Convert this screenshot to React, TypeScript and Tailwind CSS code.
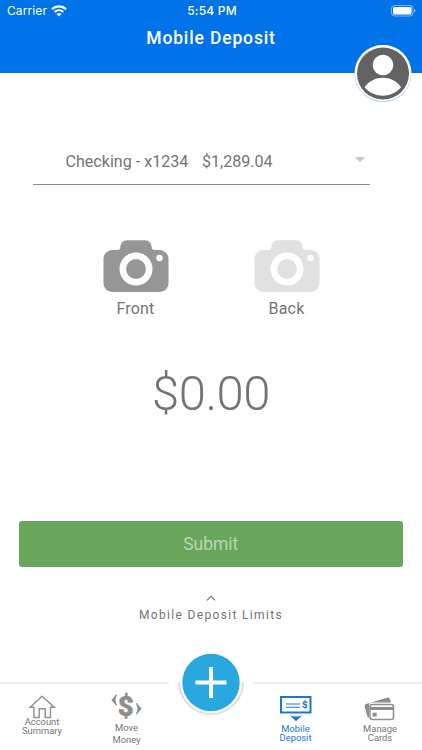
import { ReactNode } from 'react';

interface CaptureProps {
  label: string;
  color: string;
}

interface NavItemProps {
  label: string;
  icon: ReactNode;
  className: string;
}

const WifiIcon = () => (
  <svg width="16" height="12" viewBox="0 0 16 12" fill="none" stroke="#fff" strokeWidth="2.1">
    <path d="M1 4.3C5 .4 11 .4 15 4.3" />
    <path d="M3.6 7C6.2 4.6 9.800 4.6 12.400 7" />
    <path d="M8 11.600 5.500 9C6.900 7.700 9.100 7.700 10.500 9Z" fill="#fff" stroke="none" />
  </svg>
);

const BatteryIcon = () => (
  <svg width="26" height="12" viewBox="0 0 26 12" fill="none">
    <rect x=".5" y=".5" width="21.500" height="10.500" rx="3" stroke="#fff" strokeOpacity=".5" />
    <rect x="2" y="2" width="18.500" height="7.500" rx="1.600" fill="#fff" />
    <path d="M23.300 4v3.600c1.600-.6 1.600-3 0-3.600Z" fill="#fff" fillOpacity=".6" />
  </svg>
);

const Avatar = () => (
  <svg className="absolute left-[354px] top-[44px]" width="58" height="59" viewBox="0 0 58 59">
    <circle cx="29" cy="29.500" r="28.600" fill="#c3d6f0" />
    <circle cx="29" cy="29" r="28" fill="#fff" />
    <circle cx="29" cy="29.500" r="26" fill="#626262" />
    <circle cx="29" cy="21" r="10.300" fill="#fff" />
    <path d="M10.600 43.200C19 30.500 39 30.500 47 43.200C37.500 54.500 20 54.500 10.600 43.200Z" fill="#fff" />
  </svg>
);

const Capture = ({ label, color }: CaptureProps) => (
  <button className="flex w-[66px] flex-col items-center">
    <svg width="66" height="52" viewBox="0 0 66 52">
      <path
        d="M10 10H14C16 10 17.300 9.200 17.300 7.500C17.300 3.500 20 .3 24 .3H42C46 .3 48.700 3.500 48.700 7.500C48.700 9.200 50 10 52 10H56C61.500 10 65.500 14 65.500 19V43C65.500 48 61.500 52 56 52H10C4.500 52 .5 48 .5 43V19C.5 14 4.500 10 10 10Z"
        fill={color}
      />
      <circle cx="33" cy="29" r="16.500" fill="#fff" />
      <circle cx="33" cy="29" r="9.900" fill={color} />
      <circle cx="56.500" cy="18" r="3.200" fill="#fff" />
    </svg>
    <span className="mt-[5px] text-[16px] leading-[24px] tracking-[0.2px]">{label}</span>
  </button>
);

const HouseIcon = () => (
  <svg width="28" height="24" viewBox="0 0 28 24" fill="none" stroke="#949494" strokeWidth="1.500">
    <path d="M14 1.200 2.200 12.200H5.900V22.400H11.200V13.700H17.200V22.400H22.500V12.200H26.200Z" />
  </svg>
);

const MoneyIcon = () => (
  <svg width="32" height="32" viewBox="0 0 32 32" fill="#8e8e8e">
    <path d="M5.500 4.500.8 10.300 5.500 15.500 4 10.200Z" stroke="#8e8e8e" strokeWidth=".8" />
    <path d="M25.500 13.200 30.200 18.700 25.500 24.300 27 18.700Z" stroke="#8e8e8e" strokeWidth=".8" />
    <text
      x="14.800"
      y="25.700"
      textAnchor="middle"
      fontFamily="Roboto, sans-serif"
      fontSize="27.500"
      fontWeight="900"
      stroke="#8e8e8e"
      strokeWidth=".4"
    >
      $
    </text>
  </svg>
);

const CheckIcon = () => (
  <svg width="32" height="26" viewBox="0 0 32 26" fill="#1876d8">
    <rect x="1" y="1" width="29.500" height="15.500" fill="none" stroke="#1876d8" strokeWidth="2" />
    <path d="M6 7.500H20V8.600H6ZM6 10.700H20V11.800H6Z" />
    <path d="M10 19.300C14 21 18 21 22 19.300L16 25.200Z" />
    <text
      x="24.700"
      y="12.300"
      textAnchor="middle"
      fontFamily="Roboto, sans-serif"
      fontSize="9.500"
      fontWeight="900"
    >
      $
    </text>
  </svg>
);

const CardsIcon = () => (
  <svg width="32" height="24" viewBox="0 0 32 24">
    <path
      d="M2 7 23 .7C24.500.3 25.500.8 26 2.200L27 5.500H8C6 5.500 5 6.500 5 8.500V20.500C4 20.500 3.500 20 3.200 19L.8 10C.4 8.400.8 7.400 2 7Z"
      fill="#8e8e8e"
    />
    <rect x="6" y="7.400" width="23.500" height="15" rx="2.500" fill="#fff" stroke="#8e8e8e" strokeWidth="1.500" />
    <path d="M5.500 10H30V13H5.500Z" fill="#8e8e8e" />
    <rect x="8.500" y="15.700" width="4.200" height="3.800" fill="#8e8e8e" />
  </svg>
);

const NavItem = ({ label, icon, className }: NavItemProps) => (
  <a className={`flex w-[84px] flex-col items-center text-[9.400px] ${className}`}>
    {icon}
    <span className="whitespace-pre-line text-center">{label}</span>
  </a>
);

const App = () => {
  return (
    <div className="relative flex h-[750px] w-[422px] flex-col overflow-hidden bg-white font-['Roboto',sans-serif] text-[#747474]">
      <header className="h-[73px] flex-shrink-0 bg-[#0073e8] text-white">
        <div className="grid h-[21px] grid-cols-3 items-center pl-[7px] pr-[5px] font-['Inter',sans-serif] text-[12px] leading-[15px]">
          <div className="flex items-center gap-[4px] tracking-[0.1px]">
            Carrier
            <WifiIcon />
          </div>
          <span className="text-center text-[12px] font-medium tracking-[0.2px]">5:54 PM</span>
          <div className="flex justify-end">
            <BatteryIcon />
          </div>
        </div>
        <h1 className="mt-[5px] text-center text-[17.500px] font-medium leading-[25px] tracking-[0.850px]">
          Mobile Deposit
        </h1>
      </header>
      <Avatar />

      <main className="flex h-[609px] flex-shrink-0 flex-col">
        <div className="ml-[33px] mt-[76px] flex h-[36px] w-[337px] items-start border-b border-[#8c8c8c] pl-[32.500px] pr-[5px]">
          <div className="flex flex-1 gap-[13.500px] pt-px text-[16.100px] leading-[24px]">
            <span>Checking - x1234</span>
            <span>$1,289.04</span>
          </div>
          <svg className="mt-[8px]" width="10" height="6" viewBox="0 0 10 6">
            <path d="M0 0H10L5 5.500Z" fill="#c9c9c9" />
          </svg>
        </div>

        <div className="mt-[55px] flex gap-[85px] pl-[102.500px]">
          <Capture label="Front" color="#969696" />
          <Capture label="Back" color="#e1e1e1" />
        </div>

        <div className="mt-[43px] text-center text-[49px] font-light leading-[60px] tracking-[-0.5px]">$0.00</div>

        <button className="mr-[19px] ml-[18.500px] mt-[97px] h-[46px] flex-shrink-0 rounded-[3px] bg-[#6aa55c] pt-px text-[17.500px] text-[#b9d7b2]">
          Submit
        </button>

        <div className="mt-[28px] flex flex-col items-center">
          <svg width="10" height="6" viewBox="0 0 10 6" fill="none" stroke="#6a6a6a" strokeWidth="1.100">
            <path d="M1 5.300 5 1.200 9 5.300" />
          </svg>
          <span className="mt-[5px] text-[12px] leading-[18px] tracking-[1.330px]">Mobile Deposit Limits</span>
        </div>
      </main>

      <nav className="relative flex h-[68px] flex-shrink-0 justify-between">
        <div className="absolute left-0 top-0 h-[2px] w-[169px] bg-[#ececec]" />
        <div className="absolute right-0 top-0 h-[2px] w-[169px] bg-[#ececec]" />
        <NavItem label={'Account\nSummary'} icon={<HouseIcon />} className="pt-[13px] leading-[9px] [&>span]:-mt-[2px]" />
        <NavItem label={'Move\nMoney'} icon={<MoneyIcon />} className="pt-[8px] leading-[12px]" />
        <svg className="absolute left-[176px] top-[-30px]" width="70" height="68" viewBox="0 0 70 68">
          <path d="M3 30A32 32 0 0 0 67 30" fill="#fff" stroke="#e0e0e0" strokeWidth="2" />
          <circle cx="35" cy="30.500" r="28.700" fill="#29a8e0" />
          <path d="M19.500 30.500H50.500M35 15V46" stroke="#fff" strokeWidth="4" />
        </svg>
        <div className="w-[84px]" />
        <NavItem
          label={'Mobile\nDeposit'}
          icon={<CheckIcon />}
          className="gap-[2px] pt-[14px] leading-[9px] text-[#1876d8]"
        />
        <NavItem label={'Manage\nCards'} icon={<CardsIcon />} className="gap-[3px] pt-[15px] leading-[9px]" />
      </nav>
    </div>
  );
};

export default App;
